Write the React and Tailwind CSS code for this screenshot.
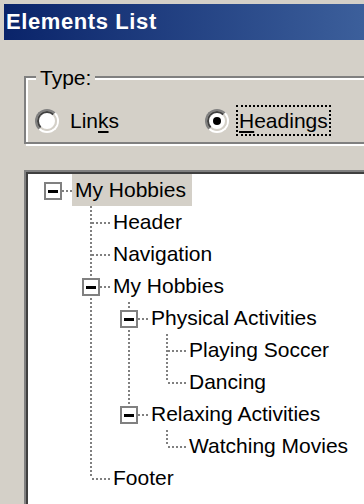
import React from "react";

const tree = [
  {
    label: "My Hobbies",
    selected: true,
    children: [
      { label: "Header" },
      { label: "Navigation" },
      {
        label: "My Hobbies",
        children: [
          {
            label: "Physical Activities",
            children: [{ label: "Playing Soccer" }, { label: "Dancing" }],
          },
          {
            label: "Relaxing Activities",
            children: [{ label: "Watching Movies" }],
          },
        ],
      },
      { label: "Footer" },
    ],
  },
];

function flatten(nodes, level, guides, out) {
  nodes.forEach((n, i) => {
    const last = i === nodes.length - 1;
    const first = level === 0 && i === 0;
    out.push({ ...n, level, guides, last, first, hasChildren: !!n.children });
    if (n.children) flatten(n.children, level + 1, [...guides, !last], out);
  });
  return out;
}

const rows = flatten(tree, 0, [], []);

const vDots =
  "bg-[repeating-linear-gradient(to_bottom,#808080_0px,#808080_2px,transparent_2px,transparent_4px)]";
const hDots =
  "bg-[repeating-linear-gradient(to_right,#808080_0px,#808080_2px,transparent_2px,transparent_4px)]";

function Radio({ checked }) {
  return (
    <div className="w-[24px] h-[24px] shrink-0 rounded-full border-2 border-t-[#808080] border-l-[#808080] border-b-white border-r-white">
      <div className="w-full h-full rounded-full border-2 border-t-[#404040] border-l-[#404040] border-b-[#d4d0c8] border-r-[#d4d0c8] bg-white flex items-center justify-center">
        {checked && <div className="w-[8px] h-[8px] rounded-full bg-black" />}
      </div>
    </div>
  );
}

function Row({ r }) {
  return (
    <div className="flex h-[32px] items-stretch">
      {r.guides.map((g, k) => (
        <div key={k} className="relative w-[38px] shrink-0">
          {g && <div className={`absolute left-[18px] top-0 w-[2px] h-[32px] ${vDots}`} />}
        </div>
      ))}
      <div className="relative w-[38px] shrink-0">
        {!r.first && <div className={`absolute left-[18px] top-0 w-[2px] h-[16px] ${vDots}`} />}
        {!r.last && <div className={`absolute left-[18px] top-[16px] w-[2px] h-[16px] ${vDots}`} />}
        <div className={`absolute left-[20px] top-[16px] h-[2px] w-[18px] ${hDots}`} />
        {r.hasChildren && (
          <div className="absolute left-[10px] top-[8px] w-[18px] h-[18px] border-2 border-[#808080] bg-white flex items-center justify-center">
            <div className="w-[10px] h-[3px] bg-black" />
          </div>
        )}
      </div>
      <div
        className={`h-[32px] leading-[32px] pl-[3px] pr-[6px] whitespace-nowrap text-black ${
          r.selected ? "bg-[#d4d0c8]" : ""
        }`}
      >
        {r.label}
      </div>
    </div>
  );
}

export default function App() {
  return (
    <div className="w-[364px] h-[504px] overflow-hidden bg-[#d4d0c8] pt-[4px] pl-[4px] font-['Liberation_Sans',Arial,sans-serif] text-[21px] text-black">
      <div className="h-[36px] w-[400px] bg-[linear-gradient(to_right,#0a246a,#3c5f9b_360px)] pl-[2px] text-white font-bold text-[22px] leading-[36px] tracking-[0.6px]">
        Elements List
      </div>

      <div className="relative ml-[20px] mt-[36px] w-[400px] h-[68px] border-2 border-[#808080] shadow-[inset_2px_2px_0_#fff,2px_2px_0_#fff] pl-[9px] pt-[27px]">
        <div className="absolute -top-[12px] left-[10px] px-[4px] bg-[#d4d0c8] leading-[24px]">
          Type:
        </div>
        <div className="flex items-center">
          <div className="flex items-center w-[170px]">
            <Radio />
            <span className="ml-[11px] leading-[24px]">
              Lin<u className="decoration-2 underline-offset-[3px]">k</u>s
            </span>
          </div>
          <div className="flex items-center">
            <Radio checked />
            <div className="ml-[7px] h-[31px] border-2 border-dotted border-black px-[1px] flex items-center">
              <span className="leading-[24px]">
                <u className="decoration-2 underline-offset-[3px]">H</u>eadings
              </span>
            </div>
          </div>
        </div>
      </div>

      <div className="mt-[26px] ml-[20px] w-[400px] h-[400px] border-t-2 border-l-2 border-[#808080]">
        <div className="w-full h-full border-t-2 border-l-2 border-[#404040] bg-white pl-[6px]">
          {rows.map((r, i) => (
            <Row key={i} r={r} />
          ))}
        </div>
      </div>
    </div>
  );
}
